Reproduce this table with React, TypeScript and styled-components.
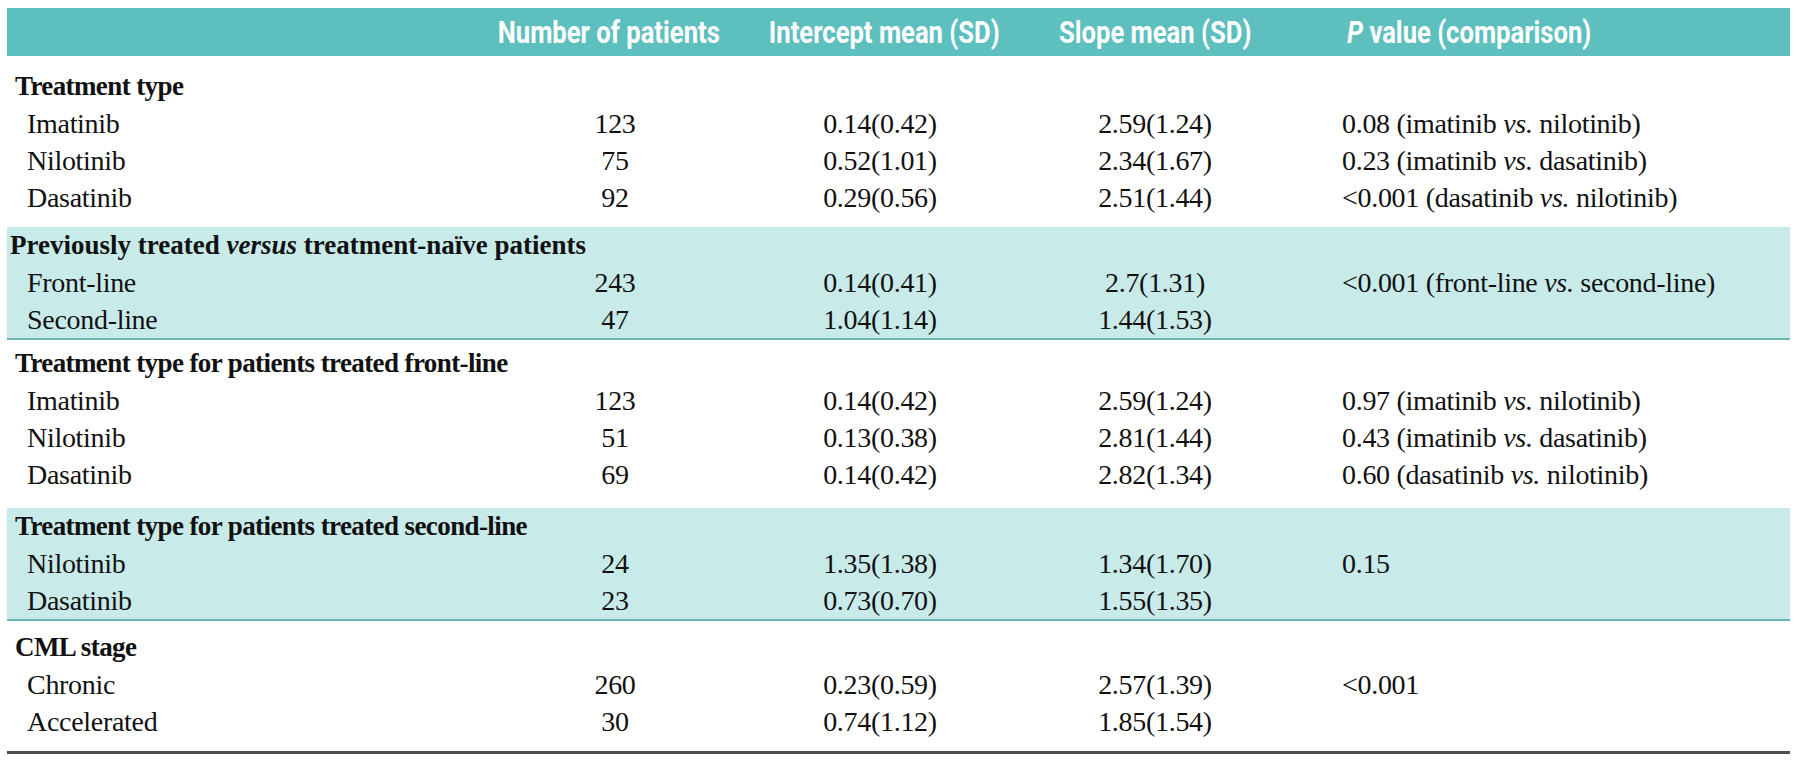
import React from "react";
import styled, { createGlobalStyle } from "styled-components";

const GlobalStyle = createGlobalStyle`
  html, body {
    margin: 0;
    padding: 0;
    background: #ffffff;
  }
`;

const Page = styled.div`
  padding: 8px 10px 0 7px;
  font-family: "Liberation Serif", "Times New Roman", serif;
  color: #111;
`;

const Table = styled.div`
  width: 1783px;
  display: flex;
  flex-direction: column;
`;

const columns = "483px 250px 280px 270px 1fr";

const HeaderBar = styled.div`
  display: grid;
  grid-template-columns: ${columns};
  height: 48px;
  align-items: center;
  background: #5ebfbf;
`;

const HeadCell = styled.div<{ $left?: boolean; $nudge?: number }>`
  text-align: ${(p) => (p.$left ? "left" : "center")};
  padding-left: ${(p) => (p.$left ? "57px" : "0")};
  margin-left: ${(p) => p.$nudge ?? 0}px;
  white-space: nowrap;
`;

// the print uses a condensed grotesque, squeeze Roboto to get close
const HeadText = styled.span<{ $left?: boolean }>`
  display: inline-block;
  font-family: Roboto, "Liberation Sans", sans-serif;
  font-weight: 700;
  font-size: 32px;
  line-height: 1;
  color: #ffffff;
  transform: scaleX(0.8);
  transform-origin: ${(p) => (p.$left ? "left center" : "center center")};

  em {
    font-style: italic;
  }
`;

const Group = styled.div<{
  $shaded: boolean;
  $last: boolean;
  $padTop: number;
  $padBottom: number;
}>`
  display: flex;
  flex-direction: column;
  padding: ${(p) => p.$padTop}px 0 ${(p) => p.$padBottom}px;
  background: ${(p) => (p.$shaded ? "#c8ebea" : "#ffffff")};
  border-bottom: ${(p) =>
    p.$shaded ? "2px solid #68b6b1" : p.$last ? "3px solid #4d4d4d" : "0"};
`;

const Heading = styled.div<{ $tight?: boolean }>`
  height: 37px;
  line-height: 37px;
  padding-left: 8px;
  margin-left: ${(p) => (p.$tight ? "-5px" : "0")};
  font-weight: 700;
  font-size: 27px;
  letter-spacing: ${(p) => (p.$tight ? "0" : "-0.6px")};
  white-space: nowrap;

  em {
    font-style: italic;
  }
`;

const DataRow = styled.div`
  display: grid;
  grid-template-columns: ${columns};
  height: 37px;
  line-height: 37px;
  font-size: 28px;
  letter-spacing: -0.3px;
  white-space: nowrap;
`;

const Label = styled.div`
  padding-left: 20px;
`;

const Num = styled.div`
  text-align: center;
`;

const PValue = styled.div`
  padding-left: 52px;
`;

const Vs = styled.i`
  font-style: italic;
`;

type Row = [string, string, string, string, React.ReactNode?];

interface Section {
  title: React.ReactNode;
  shaded: boolean;
  tight?: boolean;
  padTop: number;
  padBottom: number;
  rows: Row[];
}

const vs = <Vs>vs.</Vs>;

const sections: Section[] = [
  {
    title: "Treatment type",
    shaded: false,
    padTop: 12,
    padBottom: 11,
    rows: [
      ["Imatinib", "123", "0.14(0.42)", "2.59(1.24)", <>0.08 (imatinib {vs} nilotinib)</>],
      ["Nilotinib", "75", "0.52(1.01)", "2.34(1.67)", <>0.23 (imatinib {vs} dasatinib)</>],
      ["Dasatinib", "92", "0.29(0.56)", "2.51(1.44)", <>&lt;0.001 (dasatinib {vs} nilotinib)</>],
    ],
  },
  {
    title: (
      <>
        Previously treated <em>versus</em> treatment-naïve patients
      </>
    ),
    shaded: true,
    tight: true,
    padTop: 0,
    padBottom: 0,
    rows: [
      ["Front-line", "243", "0.14(0.41)", "2.7(1.31)", <>&lt;0.001 (front-line {vs} second-line)</>],
      ["Second-line", "47", "1.04(1.14)", "1.44(1.53)"],
    ],
  },
  {
    title: "Treatment type for patients treated front-line",
    shaded: false,
    padTop: 5,
    padBottom: 15,
    rows: [
      ["Imatinib", "123", "0.14(0.42)", "2.59(1.24)", <>0.97 (imatinib {vs} nilotinib)</>],
      ["Nilotinib", "51", "0.13(0.38)", "2.81(1.44)", <>0.43 (imatinib {vs} dasatinib)</>],
      ["Dasatinib", "69", "0.14(0.42)", "2.82(1.34)", <>0.60 (dasatinib {vs} nilotinib)</>],
    ],
  },
  {
    title: "Treatment type for patients treated second-line",
    shaded: true,
    padTop: 0,
    padBottom: 0,
    rows: [
      ["Nilotinib", "24", "1.35(1.38)", "1.34(1.70)", "0.15"],
      ["Dasatinib", "23", "0.73(0.70)", "1.55(1.35)"],
    ],
  },
  {
    title: "CML stage",
    shaded: false,
    padTop: 8,
    padBottom: 11,
    rows: [
      ["Chronic", "260", "0.23(0.59)", "2.57(1.39)", "<0.001"],
      ["Accelerated", "30", "0.74(1.12)", "1.85(1.54)"],
    ],
  },
];

const App: React.FC = () => {
  return (
    <>
      <GlobalStyle />
      <Page>
        <Table>
          <HeaderBar>
            <span />
            <HeadCell $nudge={-20}>
              <HeadText>Number of patients</HeadText>
            </HeadCell>
            <HeadCell>
              <HeadText>Intercept mean (SD)</HeadText>
            </HeadCell>
            <HeadCell>
              <HeadText>Slope mean (SD)</HeadText>
            </HeadCell>
            <HeadCell $left>
              <HeadText $left>
                <em>P</em> value (comparison)
              </HeadText>
            </HeadCell>
          </HeaderBar>
          {sections.map((s, i) => (
            <Group
              key={i}
              $shaded={s.shaded}
              $last={i === sections.length - 1}
              $padTop={s.padTop}
              $padBottom={s.padBottom}
            >
              <Heading $tight={s.tight}>{s.title}</Heading>
              {s.rows.map((r) => (
                <DataRow key={r[0]}>
                  <Label>{r[0]}</Label>
                  <Num>{r[1]}</Num>
                  <Num>{r[2]}</Num>
                  <Num>{r[3]}</Num>
                  <PValue>{r[4]}</PValue>
                </DataRow>
              ))}
            </Group>
          ))}
        </Table>
      </Page>
    </>
  );
};

export default App;
